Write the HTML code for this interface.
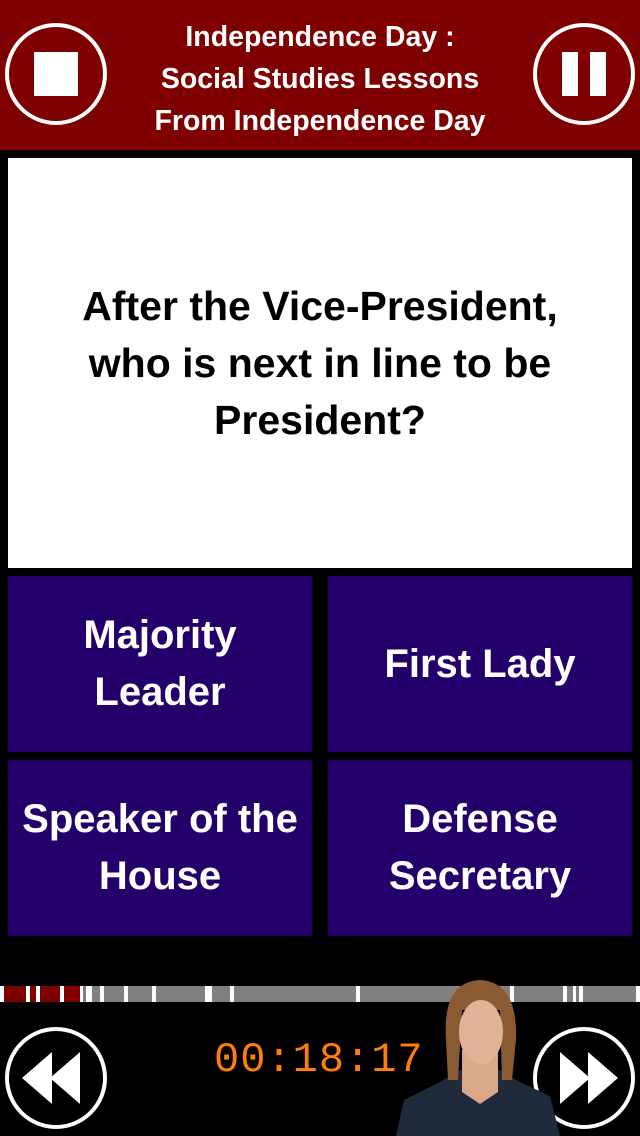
<!DOCTYPE html>
<html><head><meta charset="utf-8"><style>
*{margin:0;padding:0;box-sizing:border-box}
body{width:640px;height:1136px;background:#000;position:relative;overflow:hidden;font-family:"Liberation Sans",sans-serif;font-weight:bold}
.hdr{position:absolute;left:0;top:0;width:640px;height:150px;background:#7f0000}
.title{position:absolute;left:120px;width:400px;top:16px;text-align:center;color:#fff;font-size:28.5px;line-height:42px}
.q{position:absolute;left:8px;top:158px;width:624px;height:410px;background:#fff;display:flex;align-items:center;justify-content:center;text-align:center;font-size:41px;line-height:57px;color:#000;padding:0 40px}
.b{position:absolute;width:304px;height:176px;background:#24006a;color:#fff;display:flex;align-items:center;justify-content:center;text-align:center;font-size:40px;line-height:57px}
.bar{position:absolute;left:0;top:986px;width:640px;height:16px;background:#808080}
.bar i{position:absolute;top:0;height:16px}
.t{position:absolute;left:214px;top:1036px;font-family:"Liberation Mono",monospace;font-weight:normal;color:#ff7f00;font-size:42px;letter-spacing:1px}
</style></head><body>
<div class="hdr">
<svg width="640" height="150" style="position:absolute;left:0;top:0">
<circle cx="56" cy="74" r="49" fill="none" stroke="#fff" stroke-width="4"/>
<rect x="34" y="52" width="44" height="44" fill="#fff"/>
<circle cx="584" cy="74" r="49" fill="none" stroke="#fff" stroke-width="4"/>
<rect x="562" y="52" width="16" height="44" fill="#fff"/>
<rect x="590" y="52" width="16" height="44" fill="#fff"/>
</svg>
<div class="title">Independence Day :<br>Social Studies Lessons<br>From Independence Day</div>
</div>
<div class="q">After the Vice-President, who is next in line to be President?</div>
<div class="b" style="left:8px;top:576px">Majority<br>Leader</div>
<div class="b" style="left:328px;top:576px">First Lady</div>
<div class="b" style="left:8px;top:760px">Speaker of the<br>House</div>
<div class="b" style="left:328px;top:760px">Defense<br>Secretary</div>
<div class="bar">
<i style="left:0;width:4px;background:#fff"></i>
<i style="left:4px;width:76px;background:#7f0000"></i>
<i style="left:26px;width:4px;background:#fff"></i>
<i style="left:36px;width:4px;background:#fff"></i>
<i style="left:60px;width:4px;background:#fff"></i>
<i style="left:80px;width:3px;background:#fff"></i>
<i style="left:86px;width:6px;background:#fff"></i>
<i style="left:100px;width:4px;background:#fff"></i>
<i style="left:124px;width:4px;background:#fff"></i>
<i style="left:152px;width:4px;background:#fff"></i>
<i style="left:205px;width:7px;background:#fff"></i>
<i style="left:230px;width:4px;background:#fff"></i>
<i style="left:356px;width:4px;background:#fff"></i>
<i style="left:510px;width:4px;background:#fff"></i>
<i style="left:563px;width:4px;background:#fff"></i>
<i style="left:573px;width:3px;background:#fff"></i>
<i style="left:579px;width:4px;background:#fff"></i>
<i style="left:636px;width:4px;background:#fff"></i>
</div>
<div class="t">00:18:17</div>
<svg width="640" height="166" style="position:absolute;left:0;top:970px">
<circle cx="56" cy="108" r="49" fill="none" stroke="#fff" stroke-width="4"/>
<path d="M22 108 L52 82 L52 134Z M50 108 L80 82 L80 134Z" fill="#fff"/>
<circle cx="584" cy="108" r="49" fill="none" stroke="#fff" stroke-width="4"/>
<path d="M618 108 L588 82 L588 134Z M590 108 L560 82 L560 134Z" fill="#fff"/>
<path d="M396 166 L404 130 L440 112 L460 100 L500 100 L520 112 L550 126 L560 166Z" fill="#1f2a3a"/>
<path d="M462 80 L498 80 L498 122 L480 134 L462 122Z" fill="#d9a888"/>
<path d="M446 70 Q442 12 480 10 Q518 12 516 70 L512 110 L502 110 L500 40 L462 40 L458 110 L448 110Z" fill="#8b5a33"/>
<ellipse cx="481" cy="62" rx="22" ry="32" fill="#e0b396"/>
</svg>
</body></html>
